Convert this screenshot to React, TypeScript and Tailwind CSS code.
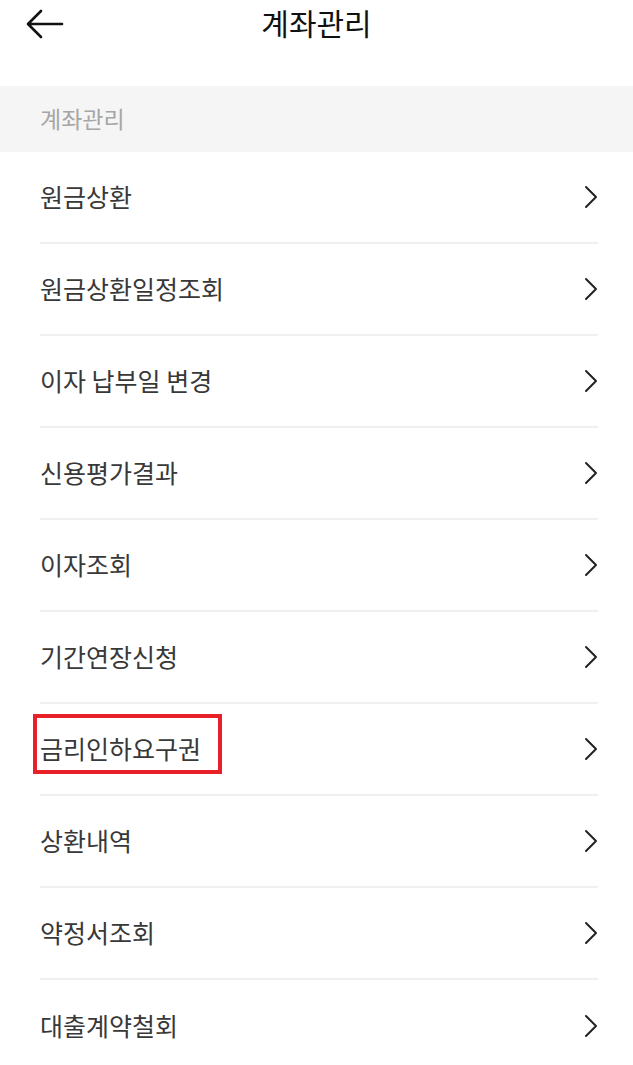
import React from 'react';

const menuItems = [
  '원금상환',
  '원금상환일정조회',
  '이자 납부일 변경',
  '신용평가결과',
  '이자조회',
  '기간연장신청',
  '금리인하요구권',
  '상환내역',
  '약정서조회',
  '대출계약철회',
];

const highlighted = '금리인하요구권';

const BackArrow: React.FC = () => (
  <svg width="38" height="30" viewBox="0 0 38 30" fill="none">
    <path d="M36 15H3M15 2L2 15l13 13" stroke="#111" strokeWidth="2.6" strokeLinecap="round" strokeLinejoin="round" />
  </svg>
);

const Chevron: React.FC = () => (
  <svg width="14" height="24" viewBox="0 0 14 24" fill="none">
    <path d="M2 2l10 10L2 22" stroke="#222" strokeWidth="2" strokeLinecap="round" strokeLinejoin="round" />
  </svg>
);

const App: React.FC = () => {
  return (
    <div
      className="w-[633px] min-h-[1065px] bg-white"
      style={{ fontFamily: '"Noto Sans CJK KR", "Noto Sans", sans-serif' }}
    >
      {/* Header */}
      <header className="relative h-[44px] flex items-center justify-center">
        <button className="absolute left-[26px] top-[9px]">
          <BackArrow />
        </button>
        <h1 className="text-[30px] leading-[38px] text-[#111] font-normal">계좌관리</h1>
      </header>

      {/* Section label */}
      <div className="mt-[42px] h-[66px] bg-[#f5f5f5] flex items-center px-[40px] pb-[3px]">
        <span className="text-[23px] leading-[30px] text-[#a6a6a6]">계좌관리</span>
      </div>

      {/* Menu list */}
      <ul className="pl-[40px] pr-[35px]">
        {menuItems.map((item, i) => (
          <li
            key={item}
            className={`h-[92px] flex items-center justify-between ${
              i < menuItems.length - 1 ? 'border-b-2 border-[#f0f0f0]' : ''
            }`}
          >
            <span className="relative text-[25px] leading-[32px] text-[#383838] -mt-[2px]">
              {item}
              {item === highlighted && (
                <span className="absolute -left-[7px] -right-[21px] -top-[18px] -bottom-[10px] border-4 border-[#e8202a]" />
              )}
            </span>
            <Chevron />
          </li>
        ))}
      </ul>
    </div>
  );
};

export default App;
